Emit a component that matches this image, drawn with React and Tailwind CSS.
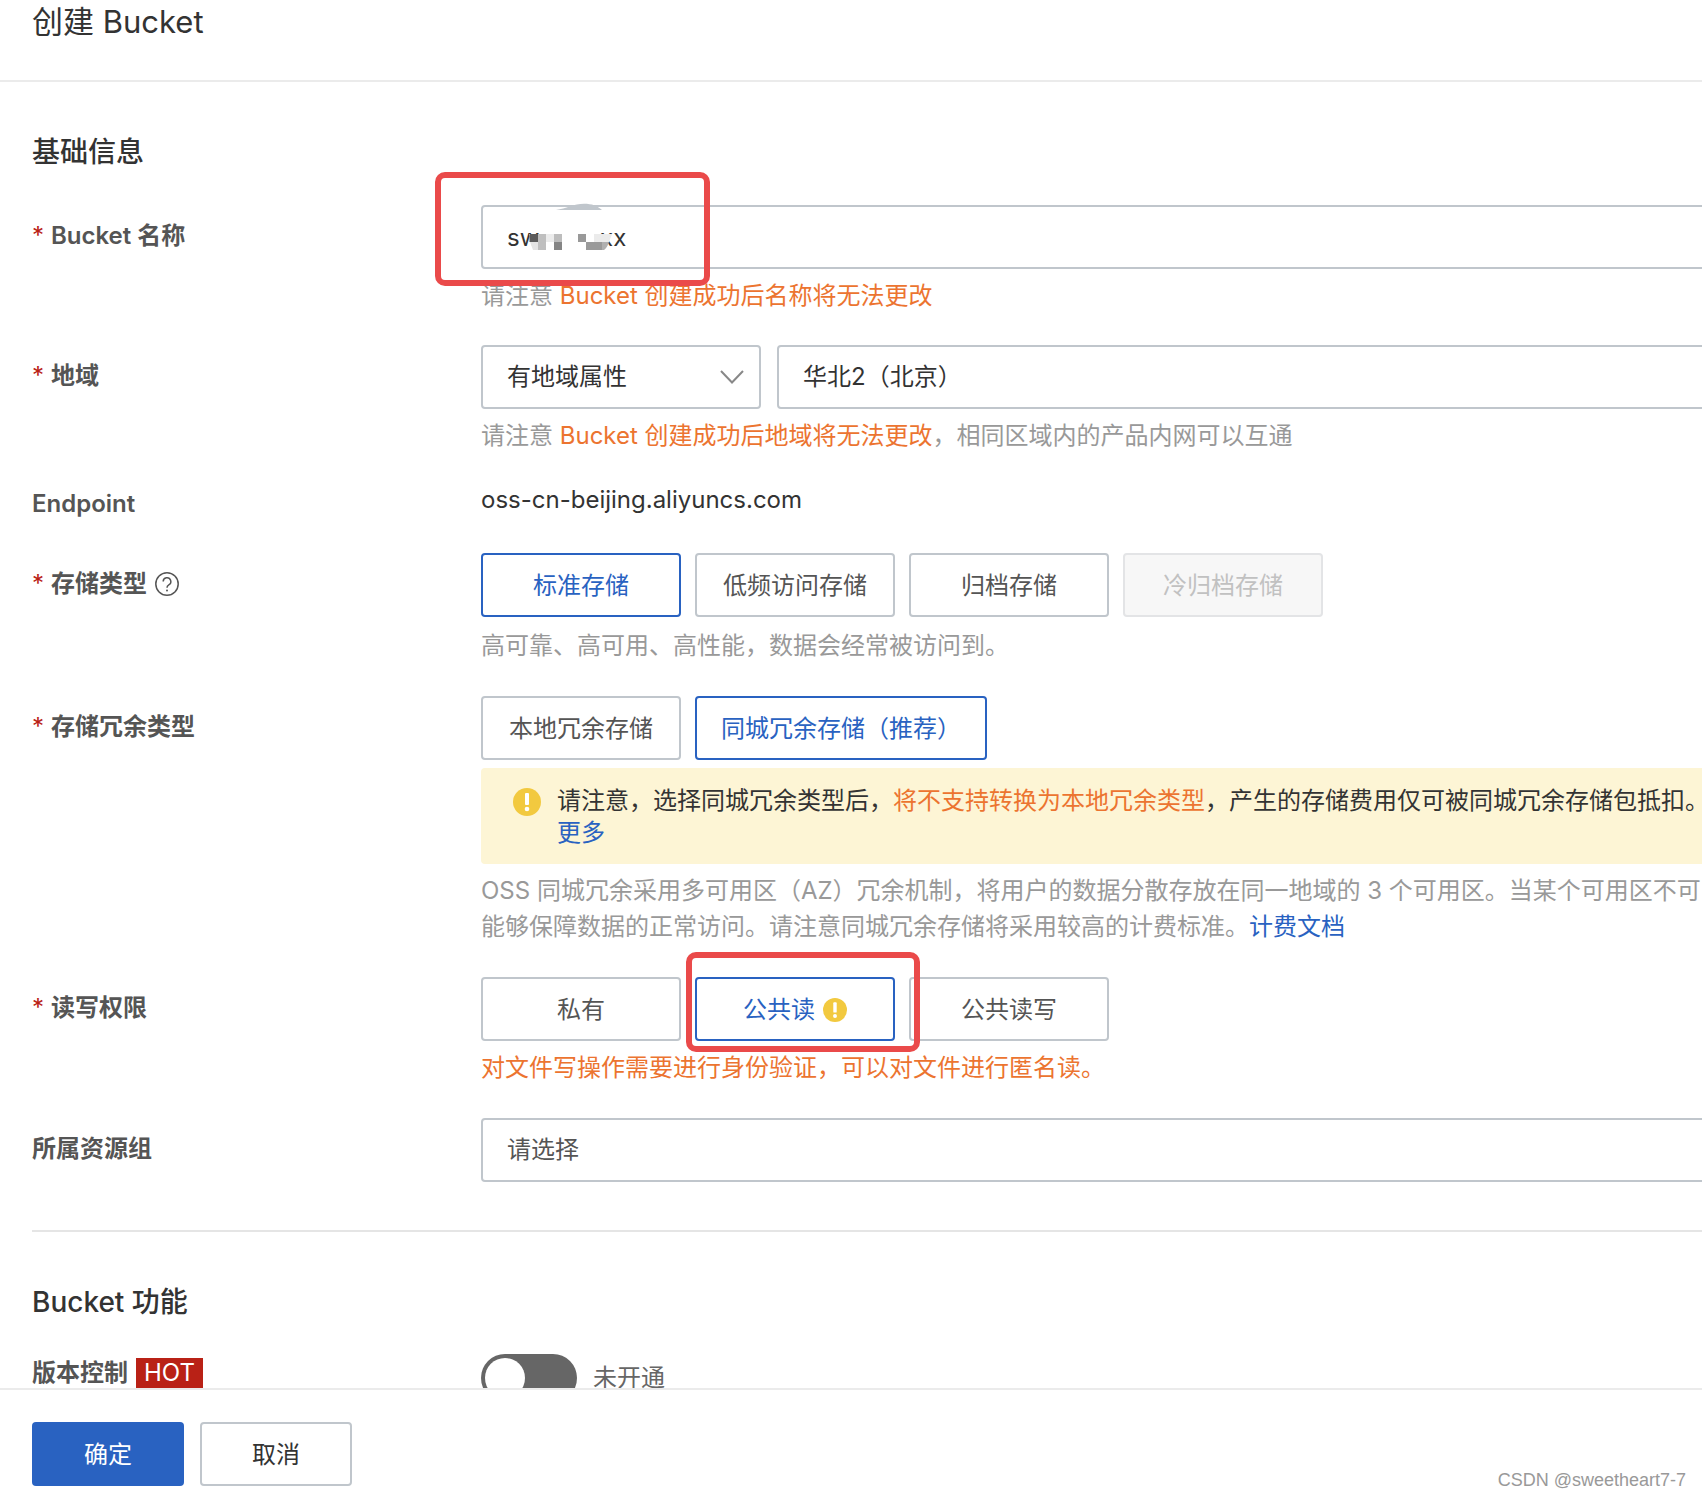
import React, { useState } from 'react';

const WarningIcon = ({ className }) => (
  <svg viewBox="0 0 28 28" className={className} aria-hidden="true">
    <circle cx="14" cy="14" r="14" fill="#f2c93f" />
    <rect x="12" y="5" width="4" height="12" rx="1" fill="#fff" />
    <circle cx="14" cy="21" r="2.3" fill="#fff" />
  </svg>
);

const HelpIcon = ({ className }) => (
  <svg viewBox="0 0 24 24" className={className} fill="none" stroke="#555" aria-hidden="true">
    <circle cx="12" cy="12" r="11.2" strokeWidth="1.5" />
    <path d="M8.2 9.6a3.8 3.8 0 1 1 5.6 3.3c-1.2.7-1.8 1.3-1.8 2.8" strokeWidth="1.5" />
    <circle cx="12" cy="18.4" r="1" fill="#555" stroke="none" />
  </svg>
);

const NameMosaic = ({ className }) => (
  <svg viewBox="0 0 140 75" className={className} aria-hidden="true">
    <path d="M56 15C66 13.500 74 8.700 84 8.700c8 0 13 2 18 6.300Z" fill="#c0c6cc" />
    <path d="M29 39h83l-8 16H33Z" fill="#fff" />
    <path d="M29.500 39h8.500v8h-8.500z" fill="#5c5c5c" />
    <path d="M38 39h8v16h-8z" fill="#bfbfbf" />
    <path d="M30 47h8v8h-5z" fill="#e4e4e4" />
    <path d="M46 39h8v8h-8z" fill="#ececec" />
    <path d="M54 39h8v8h-8z" fill="#bdbdbd" />
    <path d="M54 47h8v8h-8z" fill="#858585" />
    <path d="M78 39h8v8h-8z" fill="#999" />
    <path d="M94 39h18l-3 8H94z" fill="#ebebeb" />
    <path d="M86 47h16v8H86z" fill="#9a9a9a" />
    <path d="M102 47h7q-2 6-5 8h-2z" fill="#b0b0b0" />
  </svg>
);

const Label = ({ htmlFor, required, children, className = 'leading-[62px]' }) => (
  <div className={`flex w-[449px] shrink-0 items-center self-start font-semibold text-[#555] ${className}`}>
    {required && <span className="w-[19px] font-normal text-[#b92116]">*</span>}
    {htmlFor ? <label htmlFor={htmlFor}>{children}</label> : <span className="flex items-center">{children}</span>}
  </div>
);

const OptionButton = ({ selected, disabled, onClick, children }) => {
  let color = 'border-[#c0c6cc] bg-white text-[#555]';
  if (selected) color = 'border-[#2962c1] bg-white text-[#2962c1]';
  if (disabled) color = 'border-[#e3e4e6] bg-[#f7f7f7] text-[#c1c1c1]';

  return (
    <button
      type="button"
      disabled={disabled}
      aria-pressed={selected}
      onClick={onClick}
      className={`flex h-16 min-w-[200px] items-center justify-center rounded border-2 px-6 pt-0.5 whitespace-nowrap ${color}`}
    >
      {children}
    </button>
  );
};

const fieldClass = 'h-16 appearance-none rounded border-2 border-[#c0c6cc] bg-white px-6 text-[#333] outline-none';
const helpClass = 'mt-[9px] leading-9 whitespace-nowrap text-[#999]';

export default function App() {
  const [name, setName] = useState('sw         xx');
  const [storage, setStorage] = useState('标准存储');
  const [redundancy, setRedundancy] = useState('同城冗余存储（推荐）');
  const [acl, setAcl] = useState('公共读');
  const [versioning, setVersioning] = useState(false);

  return (
    <div className="relative flex h-screen flex-col overflow-hidden bg-white font-[Inter,'Noto_Sans_CJK_SC',sans-serif] text-[24px] text-[#333]">
      <header className="shrink-0 border-b-2 border-[#ebebeb] px-8 pb-9">
        <h1 className="text-[31px] leading-[44px]">创建 Bucket</h1>
      </header>

      <main className="min-h-0 flex-1 overflow-hidden pt-12 pl-8">
        {/* Basic info */}
        <section>
          <h2 className="mb-[31px] text-[28px] leading-[44px] font-medium">基础信息</h2>

          <div className="mb-[31px] flex">
            <Label htmlFor="bucket-name" required>Bucket 名称</Label>
            <div className="relative -mr-4 flex-1">
              <input
                id="bucket-name"
                value={name}
                onChange={(e) => setName(e.target.value)}
                className={`block w-full ${fieldClass}`}
              />
              <NameMosaic className="pointer-events-none absolute -top-2.5 left-[19px] h-[75px] w-[140px]" />
              <p className={helpClass}>
                请注意 <span className="text-[#ec7430]">Bucket 创建成功后名称将无法更改</span>
              </p>
              <div className="pointer-events-none absolute -top-[33px] -left-[46px] h-[114px] w-[275px] rounded-[10px] border-6 border-[#ea4a4a]" />
            </div>
          </div>

          <div className="mb-[31px] flex">
            <Label htmlFor="region-type" required>地域</Label>
            <div className="-mr-4 flex-1">
              <div className="flex gap-4">
                <div className="relative w-[280px]">
                  <select id="region-type" className={`w-full ${fieldClass}`}>
                    <option>有地域属性</option>
                  </select>
                  <svg viewBox="0 0 24 14" className="pointer-events-none absolute top-[25px] right-[17px] h-[14px] w-6" fill="none" stroke="#888" strokeWidth="2" aria-hidden="true">
                    <path d="M1 1l11 11.500L23 1" />
                  </svg>
                </div>
                <select aria-label="地域" className={`flex-1 ${fieldClass}`}>
                  <option>华北2（北京）</option>
                </select>
              </div>
              <p className={helpClass}>
                请注意 <span className="text-[#ec7430]">Bucket 创建成功后地域将无法更改</span>，相同区域内的产品内网可以互通
              </p>
            </div>
          </div>

          <div className="mb-8 flex h-9">
            <Label className="leading-[38px]">Endpoint</Label>
            <p className="leading-[30px]">oss-cn-beijing.aliyuncs.com</p>
          </div>

          <div className="mb-8 flex">
            <Label required>
              存储类型
              <HelpIcon className="ml-2 size-6" />
            </Label>
            <div>
              <div className="mb-[11px] flex gap-3.5">
                {['标准存储', '低频访问存储', '归档存储'].map((item) => (
                  <OptionButton key={item} selected={storage === item} onClick={() => setStorage(item)}>
                    {item}
                  </OptionButton>
                ))}
                <OptionButton disabled>冷归档存储</OptionButton>
              </div>
              <p className="leading-9 whitespace-nowrap text-[#999]">高可靠、高可用、高性能，数据会经常被访问到。</p>
            </div>
          </div>

          <div className="mb-8 flex">
            <Label required>存储冗余类型</Label>
            <div className="-mr-4 min-w-0 flex-1">
              <div className="flex gap-3.5">
                {['本地冗余存储', '同城冗余存储（推荐）'].map((item) => (
                  <OptionButton key={item} selected={redundancy === item} onClick={() => setRedundancy(item)}>
                    {item}
                  </OptionButton>
                ))}
              </div>
              <div className="mt-2 flex h-24 gap-4 rounded bg-[#fdf5d5] pt-[17px] pl-8">
                <WarningIcon className="mt-[3px] size-7 shrink-0" />
                <p className="leading-8 whitespace-nowrap">
                  请注意，选择同城冗余类型后，<span className="text-[#ec7430]">将不支持转换为本地冗余类型</span>，产生的存储费用仅可被同城冗余存储包抵扣。
                  <br />
                  <a href="#more" className="text-[#2962c1]">更多</a>
                </p>
              </div>
              <p className={helpClass}>
                OSS 同城冗余采用多可用区（AZ）冗余机制，将用户的数据分散存放在同一地域的 3 个可用区。当某个可用区不可
                <br />
                能够保障数据的正常访问。请注意同城冗余存储将采用较高的计费标准。<a href="#billing" className="text-[#2962c1]">计费文档</a>
              </p>
            </div>
          </div>

          <div className="mb-8 flex">
            <Label required>读写权限</Label>
            <div>
              <div className="flex gap-3.5">
                <OptionButton selected={acl === '私有'} onClick={() => setAcl('私有')}>私有</OptionButton>
                <div className="relative">
                  <OptionButton selected={acl === '公共读'} onClick={() => setAcl('公共读')}>
                    公共读
                    <WarningIcon className="ml-2 size-6" />
                  </OptionButton>
                  <div className="pointer-events-none absolute -top-[25px] -left-[9px] z-10 h-[100px] w-[234px] rounded-[10px] border-6 border-[#ea4a4a]" />
                </div>
                <OptionButton selected={acl === '公共读写'} onClick={() => setAcl('公共读写')}>公共读写</OptionButton>
              </div>
              <p className="mt-[9px] leading-9 whitespace-nowrap text-[#ec7430]">对文件写操作需要进行身份验证，可以对文件进行匿名读。</p>
            </div>
          </div>

          <div className="mb-12 flex">
            <Label htmlFor="resource-group">所属资源组</Label>
            <select id="resource-group" className={`-mr-4 flex-1 ${fieldClass} text-[#555]`}>
              <option>请选择</option>
            </select>
          </div>
        </section>

        {/* Bucket features */}
        <section className="border-t-2 border-[#e5e5e5] pt-12">
          <h2 className="mb-[30px] text-[28px] leading-[44px] font-medium">Bucket 功能</h2>
          <div className="flex">
            <Label className="leading-[38px]">
              版本控制
              <span className="ml-2 bg-[#b92116] px-2 leading-[30px] font-normal text-white">HOT</span>
            </Label>
            <button
              type="button"
              role="switch"
              aria-checked={versioning}
              aria-label="版本控制"
              onClick={() => setVersioning(!versioning)}
              className={`flex h-12 w-24 rounded-full p-1 ${versioning ? 'justify-end bg-[#2962c1]' : 'bg-[#666]'}`}
            >
              <span className="size-10 rounded-full bg-white" />
            </button>
            <span className="ml-4 leading-[48px] text-[#666]">{versioning ? '已开通' : '未开通'}</span>
          </div>
        </section>
      </main>

      <footer className="flex shrink-0 gap-4 border-t-2 border-[#ebebeb] bg-white px-8 pt-8 pb-2.5">
        <button type="button" className="h-16 w-[152px] rounded bg-[#2962c1] pt-0.5 text-white">确定</button>
        <button type="button" className="h-16 w-[152px] rounded border-2 border-[#c0c6cc] bg-white pt-0.5">取消</button>
      </footer>

      <div className="absolute right-4 bottom-0.5 font-['Liberation_Sans',sans-serif] text-[18px] text-[#999]">CSDN @sweetheart7-7</div>
    </div>
  );
}
